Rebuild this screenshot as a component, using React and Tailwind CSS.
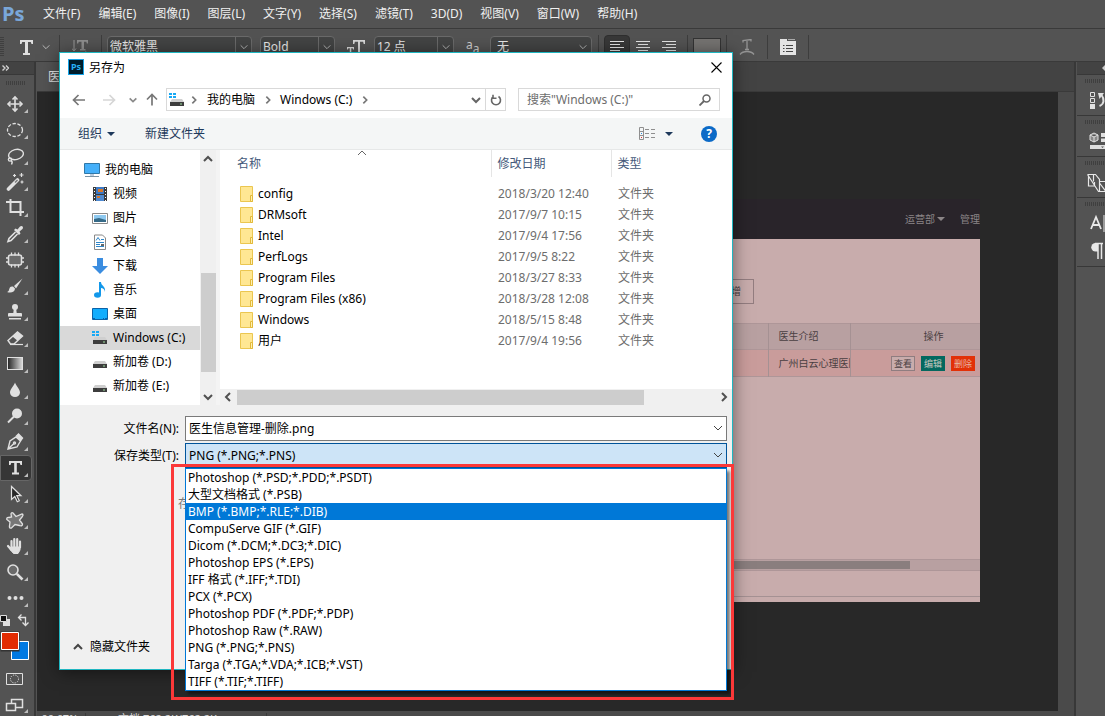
import React from 'react';

const menus = [
  '文件(F)', '编辑(E)', '图像(I)', '图层(L)', '文字(Y)', '选择(S)',
  '滤镜(T)', '3D(D)', '视图(V)', '窗口(W)', '帮助(H)',
];

const folders = [
  { name: 'config', date: '2018/3/20 12:40' },
  { name: 'DRMsoft', date: '2017/9/7 10:15' },
  { name: 'Intel', date: '2017/9/4 17:56' },
  { name: 'PerfLogs', date: '2017/9/5 8:22' },
  { name: 'Program Files', date: '2018/3/27 8:33' },
  { name: 'Program Files (x86)', date: '2018/3/28 12:08' },
  { name: 'Windows', date: '2018/5/15 8:48' },
  { name: '用户', date: '2017/9/4 19:56' },
];

const formats = [
  'Photoshop (*.PSD;*.PDD;*.PSDT)',
  '大型文档格式 (*.PSB)',
  'BMP (*.BMP;*.RLE;*.DIB)',
  'CompuServe GIF (*.GIF)',
  'Dicom (*.DCM;*.DC3;*.DIC)',
  'Photoshop EPS (*.EPS)',
  'IFF 格式 (*.IFF;*.TDI)',
  'PCX (*.PCX)',
  'Photoshop PDF (*.PDF;*.PDP)',
  'Photoshop Raw (*.RAW)',
  'PNG (*.PNG;*.PNS)',
  'Targa (*.TGA;*.VDA;*.ICB;*.VST)',
  'TIFF (*.TIF;*.TIFF)',
];

const Chevron = ({ dir = 'down', className = '' }) => {
  const paths = {
    down: 'M2 4l4 4 4-4',
    up: 'M2 8l4-4 4 4',
    left: 'M8 2L4 6l4 4',
    right: 'M4 2l4 4-4 4',
  };
  return (
    <svg viewBox="0 0 12 12" className={`shrink-0 fill-none stroke-current ${className}`}>
      <path d={paths[dir]} />
    </svg>
  );
};

/* ---------- tool icons ---------- */

const toolIcons = {
  移动: (
    <g fill="none" stroke="#e0e0e0" strokeWidth="1.6">
      <path d="M9 2v14M2 9h14" />
      <path d="M6.5 4.5L9 2l2.5 2.5M6.5 13.5L9 16l2.5-2.5M4.5 6.5L2 9l2.5 2.5M13.5 6.5L16 9l-2.5 2.5" />
    </g>
  ),
  椭圆选框: <ellipse cx="9" cy="9" rx="7.5" ry="6.5" fill="none" stroke="#e0e0e0" strokeWidth="1.3" strokeDasharray="3.4 1.6" />,
  套索: (
    <g fill="none" stroke="#e0e0e0" strokeWidth="1.4">
      <ellipse cx="10" cy="7.5" rx="7.5" ry="5" transform="rotate(-14 10 7.5)" />
      <circle cx="4" cy="12.5" r="1.6" />
      <path d="M5 13.5c2 1 1 3 .5 4" />
    </g>
  ),
  魔棒: (
    <g stroke="#e0e0e0" fill="none">
      <path d="M2.5 16L11.5 7" strokeWidth="3.6" strokeLinecap="round" />
      <path d="M9 9.500l2.500-2.500" stroke="#777" strokeWidth="1.400" />
      <path d="M8.500 1v3M7 2.500h3M15.500 0v4M13.500 2h4M16 7.500v3M14.500 9h3" strokeWidth="1.200" />
    </g>
  ),
  裁剪: <path d="M0 3h14.500v10M4.500 0v13H18M14.500 11v6" fill="none" stroke="#e0e0e0" strokeWidth="2" />,
  吸管: (
    <g>
      <path d="M9.500 7L3 13.500l-1 3 3-1L11.500 9" fill="none" stroke="#e0e0e0" strokeWidth="1.600" />
      <path d="M8 5l1.500-1.500 2 1L14 1.500c2-1.500 4 .5 2.500 2.500L13.500 6.500l1 2L13 10z" fill="#e0e0e0" />
    </g>
  ),
  修补: (
    <g fill="none" stroke="#e0e0e0">
      <rect x="2.500" y="4" width="13" height="10" rx="2" strokeWidth="1.500" fill="#6a6a6a" />
      <path d="M5.500 1.500v3M9 1.500v3M12.500 1.500v3M5.500 13.500v3M9 13.500v3M12.500 13.500v3M0 7h3M0 11h3M15 7h3M15 11h3" strokeWidth="1.300" />
    </g>
  ),
  画笔: (
    <g fill="#e0e0e0">
      <path d="M16.500 1.500L8 9l2 2.500z" />
      <path d="M7 9.500c-3-.5-3.500 1.500-4 3.500-.3 1-1 1.700-2 2 4 1.500 8 0 8-3.500z" />
    </g>
  ),
  图章: (
    <g fill="#e0e0e0">
      <circle cx="9" cy="4" r="3" />
      <path d="M7.800 6h2.400l.5 4H15q1 0 1 1v2.500H2V11q0-1 1-1h4.300zM3 15h12v1.500H3z" />
    </g>
  ),
  橡皮擦: (
    <g>
      <path d="M2 11.500L11.500 3l5 4L8 15H4.500z" fill="none" stroke="#e0e0e0" strokeWidth="1.400" />
      <path d="M6.500 7.500L11.500 3l5 4-5 4.800z" fill="#e0e0e0" />
      <path d="M4 15.500h13" stroke="#e0e0e0" strokeWidth="1.200" />
    </g>
  ),
  渐变: (
    <g>
      <defs>
        <linearGradient id="toolGradient">
          <stop offset="0" stopColor="#222" />
          <stop offset="1" stopColor="#ddd" />
        </linearGradient>
      </defs>
      <rect x="1.500" y="2.500" width="15" height="12" fill="url(#toolGradient)" stroke="#e0e0e0" />
    </g>
  ),
  模糊: <path d="M9 1.500c1 3.500 5 6.500 5 10a5 4.500 0 0 1-10 0c0-3.500 4-6.500 5-10z" fill="#e0e0e0" />,
  减淡: (
    <g fill="#e0e0e0">
      <circle cx="11" cy="6.500" r="5" />
      <path d="M8 9.500l-6 6" stroke="#e0e0e0" strokeWidth="2" />
    </g>
  ),
  钢笔: (
    <g fill="none" stroke="#e0e0e0" strokeWidth="1.400">
      <path d="M2 16l2-8 6-4 4.500 4-3.500 6zM2.500 15.500L8 10.500" />
      <circle cx="8.500" cy="10" r="1" />
      <path d="M10.500 3l2-2 4 4-1.700 2.500z" fill="#e0e0e0" />
    </g>
  ),
  文字: <path d="M3 2h13v4h-1.500l-.7-2h-3v9.500h2.200v2H6v-2h2.200V4h-3l-.7 2H3z" fill="#e0e0e0" />,
  路径选择: <path d="M5.500 1.500v13l3.300-3 2.500 5.200 2-1-2.500-5h4.200z" fill="#262626" stroke="#e0e0e0" strokeWidth="1.200" />,
  自定形状: <path d="M7 2l3 3.500 6-2.500q2 .5 0 3l-2.500 3 3 4q0 2.500-3 1.500L9 13.500 5.500 17q-2.500.5-2-2L4 11 .8 8.500Q.5 6 3 6.500L5.500 6 5 3q.5-2 2-1z" fill="#777" stroke="#e0e0e0" strokeWidth="1.300" />,
  抓手: (
    <g stroke="#e0e0e0" strokeWidth="2.200" strokeLinecap="round" fill="#e0e0e0">
      <path d="M5.500 4v7M8.300 2v8M11.200 2.200v8M14 4.500v6M2 9l3.500 4" fill="none" />
      <path d="M5.500 10h8.500v3l-2 3.500H7.500L4.500 13z" strokeWidth="1" />
    </g>
  ),
  缩放: (
    <g fill="none" stroke="#e0e0e0">
      <circle cx="7" cy="7" r="5" strokeWidth="1.600" fill="#6a6a6a" />
      <path d="M10.800 10.800l5.700 5.700" strokeWidth="2.600" />
    </g>
  ),
  更多: (
    <g fill="#e0e0e0">
      <circle cx="3.500" cy="9" r="2" />
      <circle cx="9.500" cy="9" r="2" />
      <circle cx="15.500" cy="9" r="2" />
    </g>
  ),
};

const ToolButton = ({ name, active }) => (
  <button
    aria-label={name}
    className={`flex h-[26px] w-8 items-center rounded-r-sm border pl-[5px] ${
      active ? 'border-[#666] bg-[#363636]' : 'border-transparent'
    }`}
  >
    <svg viewBox="0 0 18 18" className="h-[18px] w-[18px]">{toolIcons[name]}</svg>
    <svg viewBox="0 0 4 4" className="mb-[3px] h-1 w-1 self-end fill-[#bdbdbd]">
      <path d="M4 0v4H0z" />
    </svg>
  </button>
);

const Grip = () => (
  <div className="h-1 w-5 bg-[repeating-linear-gradient(90deg,#3f3f3f_0_1px,transparent_1px_2px)]" />
);

const Toolbox = () => (
  <aside className="flex w-9 shrink-0 flex-col border-r-2 border-[#383838] bg-[#535353]">
    <div className="flex h-3 items-center bg-[#434343] pl-0.5 text-[#d0d0d0]">
      <svg viewBox="0 0 7 6" className="h-1.5 w-[7px] fill-none stroke-current">
        <path d="M.5.5L3 3 .5 5.500M4 .5L6.500 3 4 5.500" strokeWidth="1.400" />
      </svg>
    </div>
    <div className="flex h-[17px] items-center border-t border-[#383838] pl-1.5"><Grip /></div>
    {Object.keys(toolIcons).map((name) => (
      <ToolButton key={name} name={name} active={name === '文字'} />
    ))}
    <svg viewBox="0 0 34 106" className="h-[106px] w-[34px] fill-none">
      <path d="M3 8h7v7H3z" fill="#e0e0e0" />
      <path d="M.5 4.500h6v6h-6z" fill="#111" stroke="#ddd" />
      <path d="M19 6.500h6.500v7M21.500 3.500l-3 3 3 3M22.500 11.500l3 3 3-3" stroke="#e0e0e0" strokeWidth="1.300" />
      <path d="M11.500 30.500h17v18h-17z" fill="#0179e2" stroke="#fff" />
      <path d="M.5 20.500h19v20H.5z" fill="#333" />
      <path d="M1.500 21.500h17v17h-17z" fill="#e22b02" stroke="#fff" />
      <path d="M6.500 62.500h16v11h-16z" stroke="#e0e0e0" />
      <circle cx="14.500" cy="68" r="4" stroke="#e0e0e0" strokeDasharray="1.200 1.200" />
      <path d="M11.500 88.500h11v8h-11z" stroke="#e0e0e0" strokeWidth="1.500" />
      <path d="M6.500 92.500h9v7h-9z" stroke="#e0e0e0" strokeWidth="1.500" fill="#535353" />
      <path d="M28 98v4h-4z" fill="#bdbdbd" />
    </svg>
  </aside>
);

/* ---------- top bars ---------- */

const MenuBar = () => (
  <header className="flex h-[29px] shrink-0 items-center border-b border-[#3a3a3a] text-xs text-[#f0f0f0]">
    <span className="w-[43px] pl-0.5 font-['Open_Sans'] text-xl leading-5 font-bold text-[#7aa7d9]">Ps</span>
    <nav className="flex gap-[18px]">
      {menus.map((item) => (
        <button key={item} className="whitespace-nowrap">{item}</button>
      ))}
    </nav>
  </header>
);

const DarkSelect = ({ label, value, className, split = true }) => (
  <label className={`relative flex h-[22px] shrink-0 rounded-sm border border-[#6a6a6a] bg-[#434444] ${className}`}>
    <select aria-label={label} className="w-full appearance-none bg-transparent pl-0.5 text-xs text-[#e8e8e8]">
      <option>{value}</option>
    </select>
    <span className={`absolute inset-y-0 right-0 flex w-4 items-center justify-center text-[#c8c8c8] ${split ? 'border-l border-[#6a6a6a]' : ''}`}>
      <Chevron className="h-2.5 w-2.5" />
    </span>
  </label>
);

const Divider = () => <span className="h-full w-px shrink-0 bg-[#3d3d3d]" />;

const AlignIcon = ({ type }) => {
  const d = {
    left: 'M0 1.500h14M0 4.500h10M0 7.500h14M0 10.500h10M0 13.500h14',
    center: 'M0 1.500h14M2 4.500h10M0 7.500h14M2 10.500h10M0 13.500h14',
    right: 'M0 1.500h14M4 4.500h10M0 7.500h14M4 10.500h10M0 13.500h14',
  };
  return (
    <svg viewBox="0 0 14 15" className="h-[15px] w-3.5 stroke-[#e4e4e4]"><path d={d[type]} /></svg>
  );
};

const OptionsBar = () => (
  <div className="flex h-[33px] shrink-0 items-center border-b border-[#3a3a3a] pt-1.5 pb-0.5">
    <div className="mr-4 h-5 w-1 bg-[repeating-linear-gradient(#3f3f3f_0_1px,transparent_1px_2px)]" />
    <svg viewBox="0 0 13 15" className="h-[15px] w-[13px] fill-[#e0e0e0]">
      <path d="M0 0h13v4h-1.500l-.7-2H8v11h2v2H3v-2h2V2H2.200l-.7 2H0z" />
    </svg>
    <Chevron className="mr-2 ml-2 h-2.5 w-2.5 text-[#ccc]" />
    <Divider />
    <button aria-label="切换文本取向" className="mx-3">
      <svg viewBox="0 0 17 17" className="h-[17px] w-[17px]">
        <path d="M5 1h11v3.500h-1.200l-.5-1.800H12V10h1.500v1.500H8V10h1.500V2.700H6.700l-.5 1.800H5z" fill="#8e8e8e" />
        <path d="M2 1v11M0 9.500L2 12l2-2.500M5 14.500h11M13.500 12.500l2.500 2-2.500 2" fill="none" stroke="#999" />
      </svg>
    </button>
    <Divider />
    <DarkSelect label="字体" value="微软雅黑" className="ml-[5px] w-[145px]" />
    <DarkSelect label="字体样式" value="Bold" className="ml-2 w-[75px]" />
    <svg viewBox="0 0 18 15" className="mr-[9px] ml-3 h-[15px] w-[18px] fill-[#d8d8d8]">
      <path d="M6 0h12v4h-1.300l-.6-2.200H13V12h2v1.500H9V12h2V1.800H7.900L7.300 4H6zM0 7h7v2.500H6L5.700 8.300H4.300v4h1V13.500H1.800v-1.200h1v-4H1.300L1 9.500H0z" />
    </svg>
    <DarkSelect label="字号" value="12 点" className="w-20" />
    <span className="ml-3 flex w-6 text-xs leading-3 text-[#d0d0d0]">
      <span className="pb-1">a</span>
      <span className="pt-1">a</span>
    </span>
    <DarkSelect label="消除锯齿" value="无" className="w-[102px] pl-1" split={false} />
    <span className="w-1.5" />
    <Divider />
    <div className="flex pl-[5px]">
      <button aria-label="左对齐" className="flex h-6 w-[26px] items-center justify-center rounded-sm border border-[#2f2f2f] bg-[#383838]"><AlignIcon type="left" /></button>
      <button aria-label="居中对齐" className="flex h-6 w-[26px] items-center justify-center"><AlignIcon type="center" /></button>
      <button aria-label="右对齐" className="flex h-6 w-[26px] items-center justify-center"><AlignIcon type="right" /></button>
    </div>
    <span className="w-[5px]" />
    <Divider />
    <button aria-label="文本颜色" className="mx-[5px] h-[18px] w-7 border border-[#333] bg-[#757371]" />
    <Divider />
    <svg viewBox="0 0 16 16" className="mx-3 h-4 w-4 fill-none stroke-[#959595]">
      <path d="M4 3.500V1.500l8-1v2M8 1v9.500M6 10.500h4M1 15.500c3-4 11-4 14 0" strokeWidth="1.300" />
    </svg>
    <Divider />
    <button aria-label="字符面板" className="mx-3">
      <svg viewBox="0 0 16 16" className="h-4 w-4">
        <path d="M0 0h7v2h9v14H0z" fill="#e4e4e4" />
        <path d="M8 .5h7" stroke="#aaa" />
        <path d="M3 6.500h1.500M3 9.500h1.500M3 12.500h1.500M6 6.500h7M6 9.500h7M6 12.500h7" stroke="#444" />
      </svg>
    </button>
    <Divider />
  </div>
);

/* ---------- document behind the dialog ---------- */

const Artboard = () => (
  <div className="absolute top-[107px] left-[363px] w-[580px] overflow-hidden bg-[#c8acac] text-[10px] text-[#4a3f42]">
    <div className="flex h-10 items-center justify-end gap-[15px] bg-[#29242a] text-[#8b8587]">
      <span className="flex items-center gap-0.5">
        运营部
        <svg viewBox="0 0 8 4" className="h-1 w-2 fill-current"><path d="M0 0h8L4 4z" /></svg>
      </span>
      <span>管理</span>
    </div>
    <div className="flex h-[84px] pt-10 pl-[300px]">
      <button className="h-[25px] w-[54px] border border-[#937d80] pr-3 text-right">增</button>
    </div>
    <table className="w-full table-fixed border-y border-[#ae9698] text-left">
      <colgroup>
        <col />
        <col className="w-[82px]" />
        <col className="w-[130px]" />
      </colgroup>
      <thead>
        <tr className="h-[26px] border-b border-[#ae9698] bg-[#b8a0a1]">
          <th />
          <th className="border-x border-[#a59193] pl-2.5 font-normal">医生介绍</th>
          <th className="pl-[73px] font-normal">操作</th>
        </tr>
      </thead>
      <tbody>
        <tr className="h-[27px] bg-[#c99c9b]">
          <td />
          <td className="overflow-hidden border-x border-[#a59193] pl-2.5 whitespace-nowrap">广州白云心理医院</td>
          <td>
            <div className="flex justify-end gap-1.5 pr-[5px] text-[9px] leading-[13px]">
              <button className="w-6 border border-[#8f7d80] bg-[#c8acac]">查看</button>
              <button className="w-6 bg-[#04685f] text-[#c8c8c0]">编辑</button>
              <button className="w-6 bg-[#e23007] text-[#e8b8a4]">删除</button>
            </div>
          </td>
        </tr>
      </tbody>
    </table>
    <div className="mt-[182px] h-3 border-y border-[#ae9698] bg-[#b8a0a1] py-px">
      <div className="h-2 w-[510px] bg-[#8a7e7e]" />
    </div>
    <div className="h-[26px] border-b border-[#a59193]" />
    <div className="h-[5px]" />
  </div>
);

const Workspace = () => (
  <main className="flex min-w-0 flex-1 flex-col pl-px">
    <div className="flex h-[30px] shrink-0 border-b border-[#3a3a3a] bg-[#434343]">
      <div className="flex w-52 items-center bg-[#535353] pl-[11px] text-xs text-[#e4e4e4]">医</div>
    </div>
    <div className="flex min-h-0 flex-1">
      <div className="relative flex-1 overflow-hidden bg-[#282828]"><Artboard /></div>
      <div className="w-4 bg-[#4a4a4a]" />
    </div>
    <div className="flex h-[19px] shrink-0 bg-[#4a4a4a] pt-0.5 text-[11px] leading-3 text-[#dcdcdc]">
      <span className="w-12 pl-1">66.67%</span>
      <span className="w-[182px] border-x border-[#3a3a3a] pl-8">文档:762.2K/762.2K</span>
    </div>
  </main>
);

const PanelSlot = ({ label, tall, children }) => (
  <div className={`flex flex-col items-end gap-2 border-b border-[#383838] pt-1 ${tall ? 'h-[69px]' : 'h-[41px]'}`}>
    <Grip />
    <button aria-label={label}>{children}</button>
  </div>
);

const RightPanels = () => (
  <aside className="flex w-[31px] shrink-0 flex-col border-l-2 border-[#383838] bg-[#535353] pl-px">
    <div className="flex h-[13px] items-center justify-end border-b border-[#383838] bg-[#434343]">
      <svg viewBox="0 0 3 6" className="h-1.5 w-[3px] fill-[#ccc]"><path d="M3 0v6L0 3z" /></svg>
    </div>
    <PanelSlot label="历史记录">
      <svg viewBox="0 0 16 18" className="h-[18px] w-4 fill-none stroke-[#e0e0e0]">
        <path d="M1.500 1.500h4v4h-4zM1.500 7.500h4v4h-4z" />
        <path d="M1 13h5v5H1z" fill="#e0e0e0" stroke="none" />
        <path d="M10.500 15c5-2 5-7 2-11" strokeWidth="2" />
        <path d="M9 2h6l-4.500 6z" fill="#e0e0e0" stroke="none" />
      </svg>
    </PanelSlot>
    <PanelSlot label="库">
      <svg viewBox="0 0 16 17" className="h-[17px] w-4 fill-none stroke-[#e0e0e0]">
        <path d="M5 1l4 2v5l-4 2-4-2V3zM1 3l4 2 4-2M5 5v5" fill="#888" />
        <path d="M12 1h4v4h-4zM12 6.500h4v3.500h-4zM1 13h15v4H1z" fill="#e0e0e0" stroke="none" />
        <path d="M12 14.500h3l-1.500 1.500z" fill="#555" stroke="none" />
      </svg>
    </PanelSlot>
    <PanelSlot label="3D">
      <svg viewBox="0 0 18 20" className="h-5 w-[18px] fill-none stroke-[#e8e8e8]">
        <path d="M.5 1.500h8l4 5v2h6M.5 1.500L11.500 18.500H18M1.500 3v10h6V9M6.500 1.500v7M12.500 8.500v10M12.500 10l6 8" strokeWidth="1.200" />
      </svg>
    </PanelSlot>
    <PanelSlot label="字符和段落" tall>
      <svg viewBox="0 0 15 46" className="h-[46px] w-[15px] fill-none stroke-[#e8e8e8]">
        <path d="M1 15L6 3l5 12M3 11h6" strokeWidth="1.800" />
        <path d="M14 1v17" />
        <path d="M8 30v15M11.500 30v15M5 29.500h8" strokeWidth="1.500" />
        <path d="M8 29H5.500a4 4 0 0 0 0 8.500H8z" fill="#e8e8e8" stroke="none" />
      </svg>
    </PanelSlot>
  </aside>
);

/* ---------- save dialog ---------- */

const DriveIcon = ({ windows }) => (
  <svg viewBox="0 0 16 16" className="h-4 w-4 shrink-0">
    {windows && <path d="M0 1h3v2H0zM4 1h3v2H4zM0 4h3v2H0zM4 4h3v2H4z" fill="#17a9f5" />}
    <path d="M3 7h10l2 3H1z" fill="#cfcfcf" />
    <path d="M1 10h14v4H1z" fill="#3d3d3d" />
    <path d="M11 12h2" stroke="#9fe0a0" />
  </svg>
);

const sidebarIcons = {
  computer: (
    <g>
      <path d="M.5 1.500h15v10H.5z" fill="#45b0fa" stroke="#3078a8" />
      <path d="M6 12h4v2H6z" fill="#bcd" />
      <path d="M1 14.500h14" stroke="#7b93a3" />
    </g>
  ),
  video: (
    <g>
      <path d="M1 1h14v14H1z" fill="#3a3a3a" />
      <path d="M4 1h8v7H4z" fill="#3d79c4" />
      <path d="M4 9h8v6H4z" fill="#4f8ad0" />
      <path d="M6 3h5v3H6zM5 10h3v2H5z" fill="#d9772a" />
      <path d="M2.500 2v13M13.500 2v13" stroke="#fff" strokeDasharray="1 2" />
    </g>
  ),
  picture: (
    <g>
      <path d="M.5 3.500h15v10H.5z" fill="#fff" stroke="#8a8a8a" />
      <path d="M2 5h12v7H2z" fill="#8ec9f0" />
      <path d="M2 9l5-1 7 2v2H2z" fill="#356a88" />
    </g>
  ),
  document: (
    <g>
      <path d="M2.500 1h8l3 3v11.500h-11z" fill="#fff" stroke="#888" />
      <path d="M4 6.500l2-3 2 3M4 8.500h8M4 10.500h4M4 12.500h8M9 5.500h3" stroke="#2e86c9" fill="none" />
      <path d="M9 10h3v2H9z" fill="#666" />
    </g>
  ),
  download: <path d="M5 0h6v8h5l-8 8-8-8h5z" fill="#3b8de0" />,
  music: (
    <g fill="#1298ea">
      <path d="M7 0h2c0 4 5 4 4 10-.5-3-2-4-4-4v7H7z" />
      <ellipse cx="5.500" cy="13" rx="3.500" ry="2.700" />
    </g>
  ),
  desktop: (
    <g>
      <path d="M.5 2.500h15v11H.5z" fill="#12adfd" stroke="#0b62a8" />
      <path d="M1 12.500h14" stroke="#0b62a8" strokeDasharray="2 8 1 1" />
    </g>
  ),
};

const places = [
  { name: '视频', icon: 'video' },
  { name: '图片', icon: 'picture' },
  { name: '文档', icon: 'document' },
  { name: '下载', icon: 'download' },
  { name: '音乐', icon: 'music' },
  { name: '桌面', icon: 'desktop' },
  { name: 'Windows (C:)', windows: true, selected: true },
  { name: '新加卷 (D:)' },
  { name: '新加卷 (E:)' },
];

const PlaceIcon = ({ icon }) => (
  <svg viewBox="0 0 16 16" className="h-4 w-4 shrink-0">{sidebarIcons[icon]}</svg>
);

const FolderIcon = () => (
  <svg viewBox="0 0 14 16" className="h-4 w-3.5 shrink-0">
    <path d="M.5.5h12v15H.5z" fill="#ffe793" stroke="#ebc650" />
    <path d="M10.500 9.500h2v6h-2z" fill="#fff0b0" stroke="#e2b93a" />
  </svg>
);

const Sidebar = () => (
  <div className="flex w-40 shrink-0 border-r-4 border-[#f4f4f4] bg-white">
    <div className="flex-1 pt-2">
      <button className="flex h-6 w-full items-center gap-[5px] pl-6">
        <PlaceIcon icon="computer" />我的电脑
      </button>
      {places.map((place) => (
        <button
          key={place.name}
          className={`flex h-6 w-full items-center gap-[5px] pl-8 whitespace-nowrap ${place.selected ? 'bg-[#d9d9d9]' : ''}`}
        >
          {place.icon ? <PlaceIcon icon={place.icon} /> : <DriveIcon windows={place.windows} />}
          {place.name}
        </button>
      ))}
    </div>
    <div className="flex w-4 flex-col items-center bg-[#f0f0f0] text-[#505050]">
      <Chevron dir="up" className="mt-[3px] h-3 w-3 stroke-2" />
      <div className="mt-[108px] h-[99px] w-[15px] bg-[#cdcdcd]" />
      <Chevron className="mt-auto mb-0.5 h-3 w-3 stroke-2" />
    </div>
  </div>
);

const FileList = () => (
  <div className="flex min-w-0 flex-1 flex-col bg-white">
    <div className="relative flex-1">
      <Chevron dir="up" className="absolute top-[-3px] left-[136px] h-3 w-3 text-[#666]" />
      <table className="w-full table-fixed text-left">
        <colgroup>
          <col />
          <col className="w-[120px]" />
          <col className="w-[121px]" />
        </colgroup>
        <thead>
          <tr className="h-[27px] text-[#44597a]">
            <th className="border-r border-[#e5e5e5] pl-[17px] font-normal">名称</th>
            <th className="border-r border-[#e5e5e5] pl-1.5 font-normal">修改日期</th>
            <th className="pl-1.5 font-normal">类型</th>
          </tr>
        </thead>
        <tbody className="before:block before:h-1.5">
          {folders.map((folder) => (
            <tr key={folder.name} className="h-[21px]">
              <td className="py-0 pl-5">
                <span className="flex items-center gap-1"><FolderIcon />{folder.name}</span>
              </td>
              <td className="pl-[7px] text-[#6d6d6d]">{folder.date}</td>
              <td className="pl-[7px] text-[#6d6d6d]">文件夹</td>
            </tr>
          ))}
        </tbody>
      </table>
    </div>
    <div className="flex h-4 items-center bg-[#f0f0f0] text-[#505050]">
      <Chevron dir="left" className="mx-0.5 h-3 w-3 stroke-2" />
      <div className="ml-px h-[15px] w-[407px] bg-[#cdcdcd]" />
      <Chevron dir="right" className="mr-0.5 ml-auto h-3 w-3 stroke-2" />
    </div>
  </div>
);

const AddressRow = () => (
  <div className="flex h-[37px] shrink-0 items-center pr-3 pl-3 text-[#666]">
    <button aria-label="后退">
      <svg viewBox="0 0 14 12" className="h-3 w-3.5 fill-none stroke-[#777]"><path d="M13 6H2M6.500 1L1.500 6l5 5" strokeWidth="1.700" /></svg>
    </button>
    <button aria-label="前进" className="ml-4">
      <svg viewBox="0 0 14 12" className="h-3 w-3.5 fill-none stroke-[#d6d6d6]"><path d="M1 6h11M7.500 1l5 5-5 5" strokeWidth="1.700" /></svg>
    </button>
    <Chevron className="ml-3 h-2.5 w-2.5 stroke-2 text-[#8a8a8a]" />
    <button aria-label="上一级" className="ml-2">
      <svg viewBox="0 0 12 13" className="h-[13px] w-3 fill-none stroke-[#777]"><path d="M6 12.500V2M1 6.500l5-5 5 5" strokeWidth="1.700" /></svg>
    </button>
    <div className="ml-2 flex h-[23px] flex-1 items-center border border-[#d9d9d9] text-black">
      <span className="ml-0.5"><DriveIcon windows /></span>
      <Chevron dir="right" className="mx-1 h-2.5 w-2.5 stroke-2 text-[#777]" />
      <button className="ml-1 whitespace-nowrap">我的电脑</button>
      <Chevron dir="right" className="mr-[7px] ml-2 h-2.5 w-2.5 stroke-2 text-[#777]" />
      <button className="whitespace-nowrap">Windows (C:)</button>
      <Chevron dir="right" className="mx-2 h-2.5 w-2.5 stroke-2 text-[#777]" />
      <Chevron className="mr-[3px] ml-auto h-3 w-3 stroke-2 text-[#666]" />
      <button aria-label="刷新" className="flex h-full w-5 items-center justify-center border-l border-[#d9d9d9]">
        <svg viewBox="0 0 12 12" className="h-3 w-3 fill-none stroke-[#666]">
          <path d="M3.500 2.500a4.500 4.500 0 1 0 5 0M3 .8v3.500h3.500" strokeWidth="1.600" />
        </svg>
      </button>
    </div>
    <label className="ml-3 flex h-[23px] w-[202px] items-center border border-[#d9d9d9] pr-2 pl-2">
      <input aria-label="搜索" placeholder={'搜索"Windows (C:)"'} className="min-w-0 flex-1 placeholder:text-[#6d6d6d]" />
      <svg viewBox="0 0 12 12" className="h-3 w-3 fill-none stroke-[#666]">
        <circle cx="7.500" cy="4.500" r="3.500" strokeWidth="1.500" />
        <path d="M5 7L.5 11.500" strokeWidth="1.800" />
      </svg>
    </label>
  </div>
);

const SaveDialog = () => (
  <section
    role="dialog"
    aria-label="另存为"
    className="absolute top-[52px] left-[59px] flex w-[674px] flex-col border border-[#1fb6c1] bg-white text-xs text-black shadow-[0_2px_16px_rgba(0,0,0,0.5)]"
  >
    <div className="flex h-7 items-center pr-2.5 pl-2">
      <span className="flex h-4 w-4 items-center justify-center border border-[#16a4e8] bg-[#001d2c] text-[9px] font-bold text-[#27b0f5]">Ps</span>
      <h1 className="ml-[5px] pt-0.5">另存为</h1>
      <button aria-label="关闭" className="ml-auto">
        <svg viewBox="0 0 11 11" className="h-[11px] w-[11px] stroke-black"><path d="M.5.5l10 10M10.500.5l-10 10" strokeWidth="1.100" /></svg>
      </button>
    </div>
    <AddressRow />
    <div className="flex h-8 items-center border-b border-[#e6e8e8] bg-[#f4f6f6] pr-[15px] pl-[18px] text-[#1e395b]">
      <button className="flex items-center gap-[5px]">
        组织
        <svg viewBox="0 0 8 4" className="h-1 w-2 fill-current"><path d="M0 0h8L4 4z" /></svg>
      </button>
      <button className="ml-[30px]">新建文件夹</button>
      <button aria-label="更改视图" className="ml-auto flex items-center gap-2.5">
        <svg viewBox="0 0 16 13" className="h-[13px] w-4 fill-none stroke-[#8f8f8f]">
          <path d="M.5.5h4v12h-4zM.5 4.500h4M.5 8.500h4M6 2.500h4M12 2.500h4M6 6.500h4M12 6.500h4M6 10.500h4M12 10.500h4" />
          <path d="M2 6.500h1" stroke="#2a8de0" />
          <path d="M2 10.500h1" stroke="#d33" />
        </svg>
        <svg viewBox="0 0 8 4" className="h-1 w-2 fill-current"><path d="M0 0h8L4 4z" /></svg>
      </button>
      <button aria-label="帮助" className="ml-7 h-4 w-4 rounded-full bg-[#0b6ac7] text-center leading-4 font-bold text-white">?</button>
    </div>
    <div className="flex h-[255px]">
      <Sidebar />
      <FileList />
    </div>
    <div className="flex h-[264px] flex-col bg-[#f0f0f0] pt-[11px] pr-[5px] pb-3.5">
      <div className="flex items-center">
        <label htmlFor="file-name" className="w-[125px] pr-1.5 text-right">文件名(N):</label>
        <div className="relative flex-1">
          <input id="file-name" defaultValue="医生信息管理-删除.png" className="block h-[25px] w-full border border-[#7a7a7a] bg-white px-[3px] pb-0.5" />
          <Chevron className="absolute top-1.5 right-[3px] h-3 w-3 text-[#444]" />
        </div>
      </div>
      <div className="mt-0.5 flex items-center">
        <label htmlFor="file-type" className="w-[125px] pr-1.5 text-right">保存类型(T):</label>
        <div className="relative flex-1">
          <select id="file-type" className="block h-[25px] w-full appearance-none border border-[#00549a] bg-[#cde4f7] px-[3px]">
            <option>PNG (*.PNG;*.PNS)</option>
          </select>
          <Chevron className="absolute top-1.5 right-[3px] h-3 w-3 text-[#444]" />
          <ul role="listbox" aria-label="保存类型" className="absolute inset-x-0 top-full z-10 border border-[#0078d7] bg-white shadow-[3px_3px_3px_rgba(0,0,0,0.5)]">
            {formats.map((format) => (
              <li
                key={format}
                role="option"
                aria-selected={format.startsWith('BMP')}
                className={`h-[17px] pl-0.5 leading-[17px] ${format.startsWith('BMP') ? 'bg-[#0078d7] text-white' : ''}`}
              >
                {format}
              </li>
            ))}
          </ul>
          <div className="pointer-events-none absolute top-[21px] right-[-7px] left-[-14px] z-20 h-[236px] border-3 border-[#fb3838]" />
        </div>
      </div>
      <p className="mt-7 pl-[118px] text-[#777]">存</p>
      <button className="mt-auto flex items-center gap-1.5 self-start pl-3">
        <Chevron dir="up" className="h-3 w-3 stroke-2 text-[#444]" />隐藏文件夹
      </button>
    </div>
  </section>
);

const App = () => (
  <div className="relative h-screen overflow-hidden bg-[#535353] font-['Noto_Sans','Noto_Sans_CJK_SC',sans-serif]">
    <div className="flex h-[calc(100vh+14px)] flex-col">
      <MenuBar />
      <OptionsBar />
      <div className="flex min-h-0 flex-1">
        <Toolbox />
        <Workspace />
        <RightPanels />
      </div>
    </div>
    <SaveDialog />
  </div>
);

export default App;
